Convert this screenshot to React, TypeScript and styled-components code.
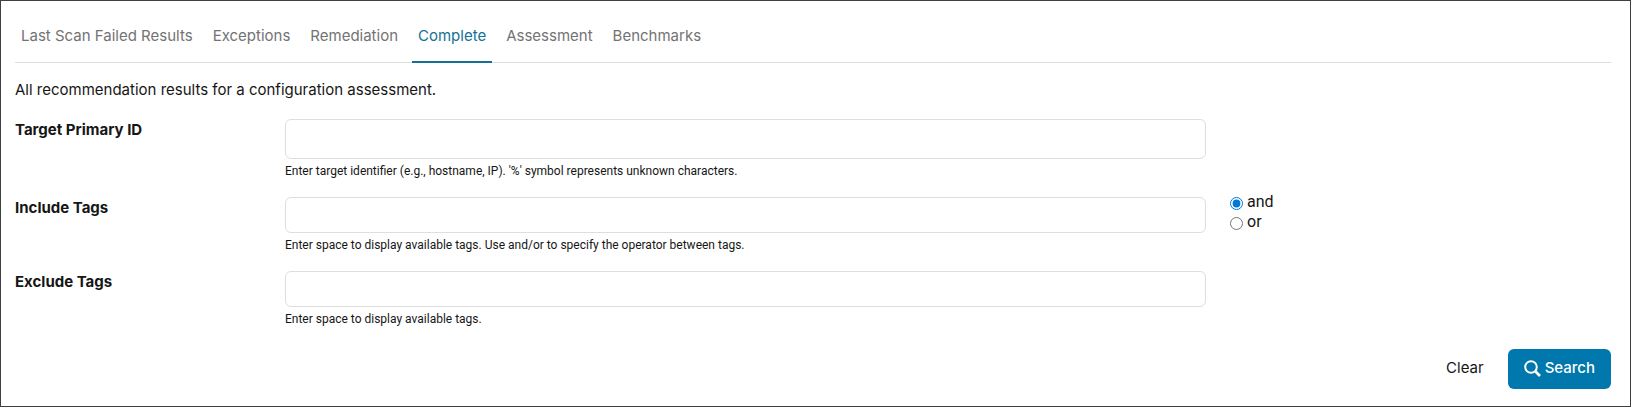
import React, { useState } from "react";
import styled, { createGlobalStyle } from "styled-components";

const GlobalStyle = createGlobalStyle`
  *, *::before, *::after { box-sizing: border-box; }
  body {
    margin: 0;
    background: #fff;
    color: #161616;
    font: 15px/24px Inter, "Liberation Sans", sans-serif;
  }
  button, input { font: inherit; color: inherit; }
`;

const Panel = styled.main`
  min-height: 100vh;
  padding: 17px 19px 16px 14px;
  border: 1px solid #404040;
`;

const Tabs = styled.nav`
  display: flex;
  flex-wrap: wrap;
  gap: 8px;
  border-bottom: 1px solid #dedede;
`;

const Tab = styled.a<{ $active?: boolean }>`
  margin-bottom: -1px;
  padding: 6px 6px 13px;
  border-bottom: 2px solid ${(p) => (p.$active ? "#147194" : "transparent")};
  color: ${(p) => (p.$active ? "#147194" : "#737373")};
  text-decoration: none;
`;

const Intro = styled.p`
  margin: 15px 0 17px;
`;

const Row = styled.div`
  display: grid;
  grid-template-columns: minmax(0, 270fr) minmax(0, 921fr) minmax(0, 405fr);
  margin-bottom: 14px;
`;

const FieldLabel = styled.label`
  font-weight: 700;
  line-height: 22px;
`;

const Field = styled.div`
  display: flex;
  flex-direction: column;
`;

const TextInput = styled.input<{ $tall?: boolean }>`
  width: 100%;
  height: ${(p) => (p.$tall ? 40 : 36)}px;
  padding: 0 12px;
  border: 1px solid #dedede;
  border-radius: 6px;
  background: #fff;
`;

const Hint = styled.small`
  margin-top: 2px;
  padding-bottom: 2px;
  font-family: Roboto, "Liberation Sans", sans-serif;
  font-size: 12px;
  line-height: 20px;
`;

const Operators = styled.div`
  display: flex;
  flex-direction: column;
  height: 40px;
  margin-top: -5px;
  padding-left: 24px;
  font-family: Roboto, "Liberation Sans", sans-serif;
  font-size: 16px;
`;

const Operator = styled.label`
  display: flex;
  align-items: center;
  gap: 4px;
  line-height: 20px;
`;

const Radio = styled.input`
  width: 13px;
  height: 13px;
  margin: 3px 0 0;
  accent-color: #0078d7;
`;

const Actions = styled.div`
  display: flex;
  justify-content: flex-end;
  gap: 8px;
  margin-top: 18px;
`;

const Button = styled.button<{ $primary?: boolean }>`
  display: flex;
  align-items: center;
  gap: 4px;
  height: 40px;
  padding: 0 16px 2px;
  border: 0;
  border-radius: 6px;
  background: ${(p) => (p.$primary ? "#0077ad" : "transparent")};
  color: ${(p) => (p.$primary ? "#fff" : "inherit")};
  font-weight: ${(p) => (p.$primary ? 500 : 400)};
`;

const SearchIcon = () => (
  <svg width="17" height="17" viewBox="0 0 17 17" fill="none" stroke="#fff" aria-hidden="true">
    <circle cx="7" cy="7" r="5.8" strokeWidth="2" />
    <path d="M11 11l5 5" strokeWidth="2.6" />
  </svg>
);

const tabs = [
  "Last Scan Failed Results",
  "Exceptions",
  "Remediation",
  "Complete",
  "Assessment",
  "Benchmarks",
];

export default function App() {
  const [active, setActive] = useState("Complete");
  return (
    <>
      <GlobalStyle />
      <Panel>
        <Tabs>
          {tabs.map((name) => (
            <Tab
              key={name}
              href="#"
              $active={name === active}
              aria-current={name === active ? "page" : undefined}
              onClick={() => setActive(name)}
            >
              {name}
            </Tab>
          ))}
        </Tabs>
        <Intro>All recommendation results for a configuration assessment.</Intro>
        <form onSubmit={(e) => e.preventDefault()}>
          <Row>
            <FieldLabel htmlFor="target">Target Primary ID</FieldLabel>
            <Field>
              <TextInput id="target" type="text" $tall aria-describedby="target-hint" />
              <Hint id="target-hint">
                Enter target identifier (e.g., hostname, IP). '%' symbol represents unknown characters.
              </Hint>
            </Field>
          </Row>
          <Row>
            <FieldLabel htmlFor="include">Include Tags</FieldLabel>
            <Field>
              <TextInput id="include" type="text" aria-describedby="include-hint" />
              <Hint id="include-hint">
                Enter space to display available tags. Use and/or to specify the operator between tags.
              </Hint>
            </Field>
            <Operators role="radiogroup" aria-label="Tag operator">
              <Operator>
                <Radio type="radio" name="operator" value="and" defaultChecked />
                and
              </Operator>
              <Operator>
                <Radio type="radio" name="operator" value="or" />
                or
              </Operator>
            </Operators>
          </Row>
          <Row>
            <FieldLabel htmlFor="exclude">Exclude Tags</FieldLabel>
            <Field>
              <TextInput id="exclude" type="text" aria-describedby="exclude-hint" />
              <Hint id="exclude-hint">Enter space to display available tags.</Hint>
            </Field>
          </Row>
          <Actions>
            <Button type="reset">Clear</Button>
            <Button type="submit" $primary>
              <SearchIcon />
              Search
            </Button>
          </Actions>
        </form>
      </Panel>
    </>
  );
}
